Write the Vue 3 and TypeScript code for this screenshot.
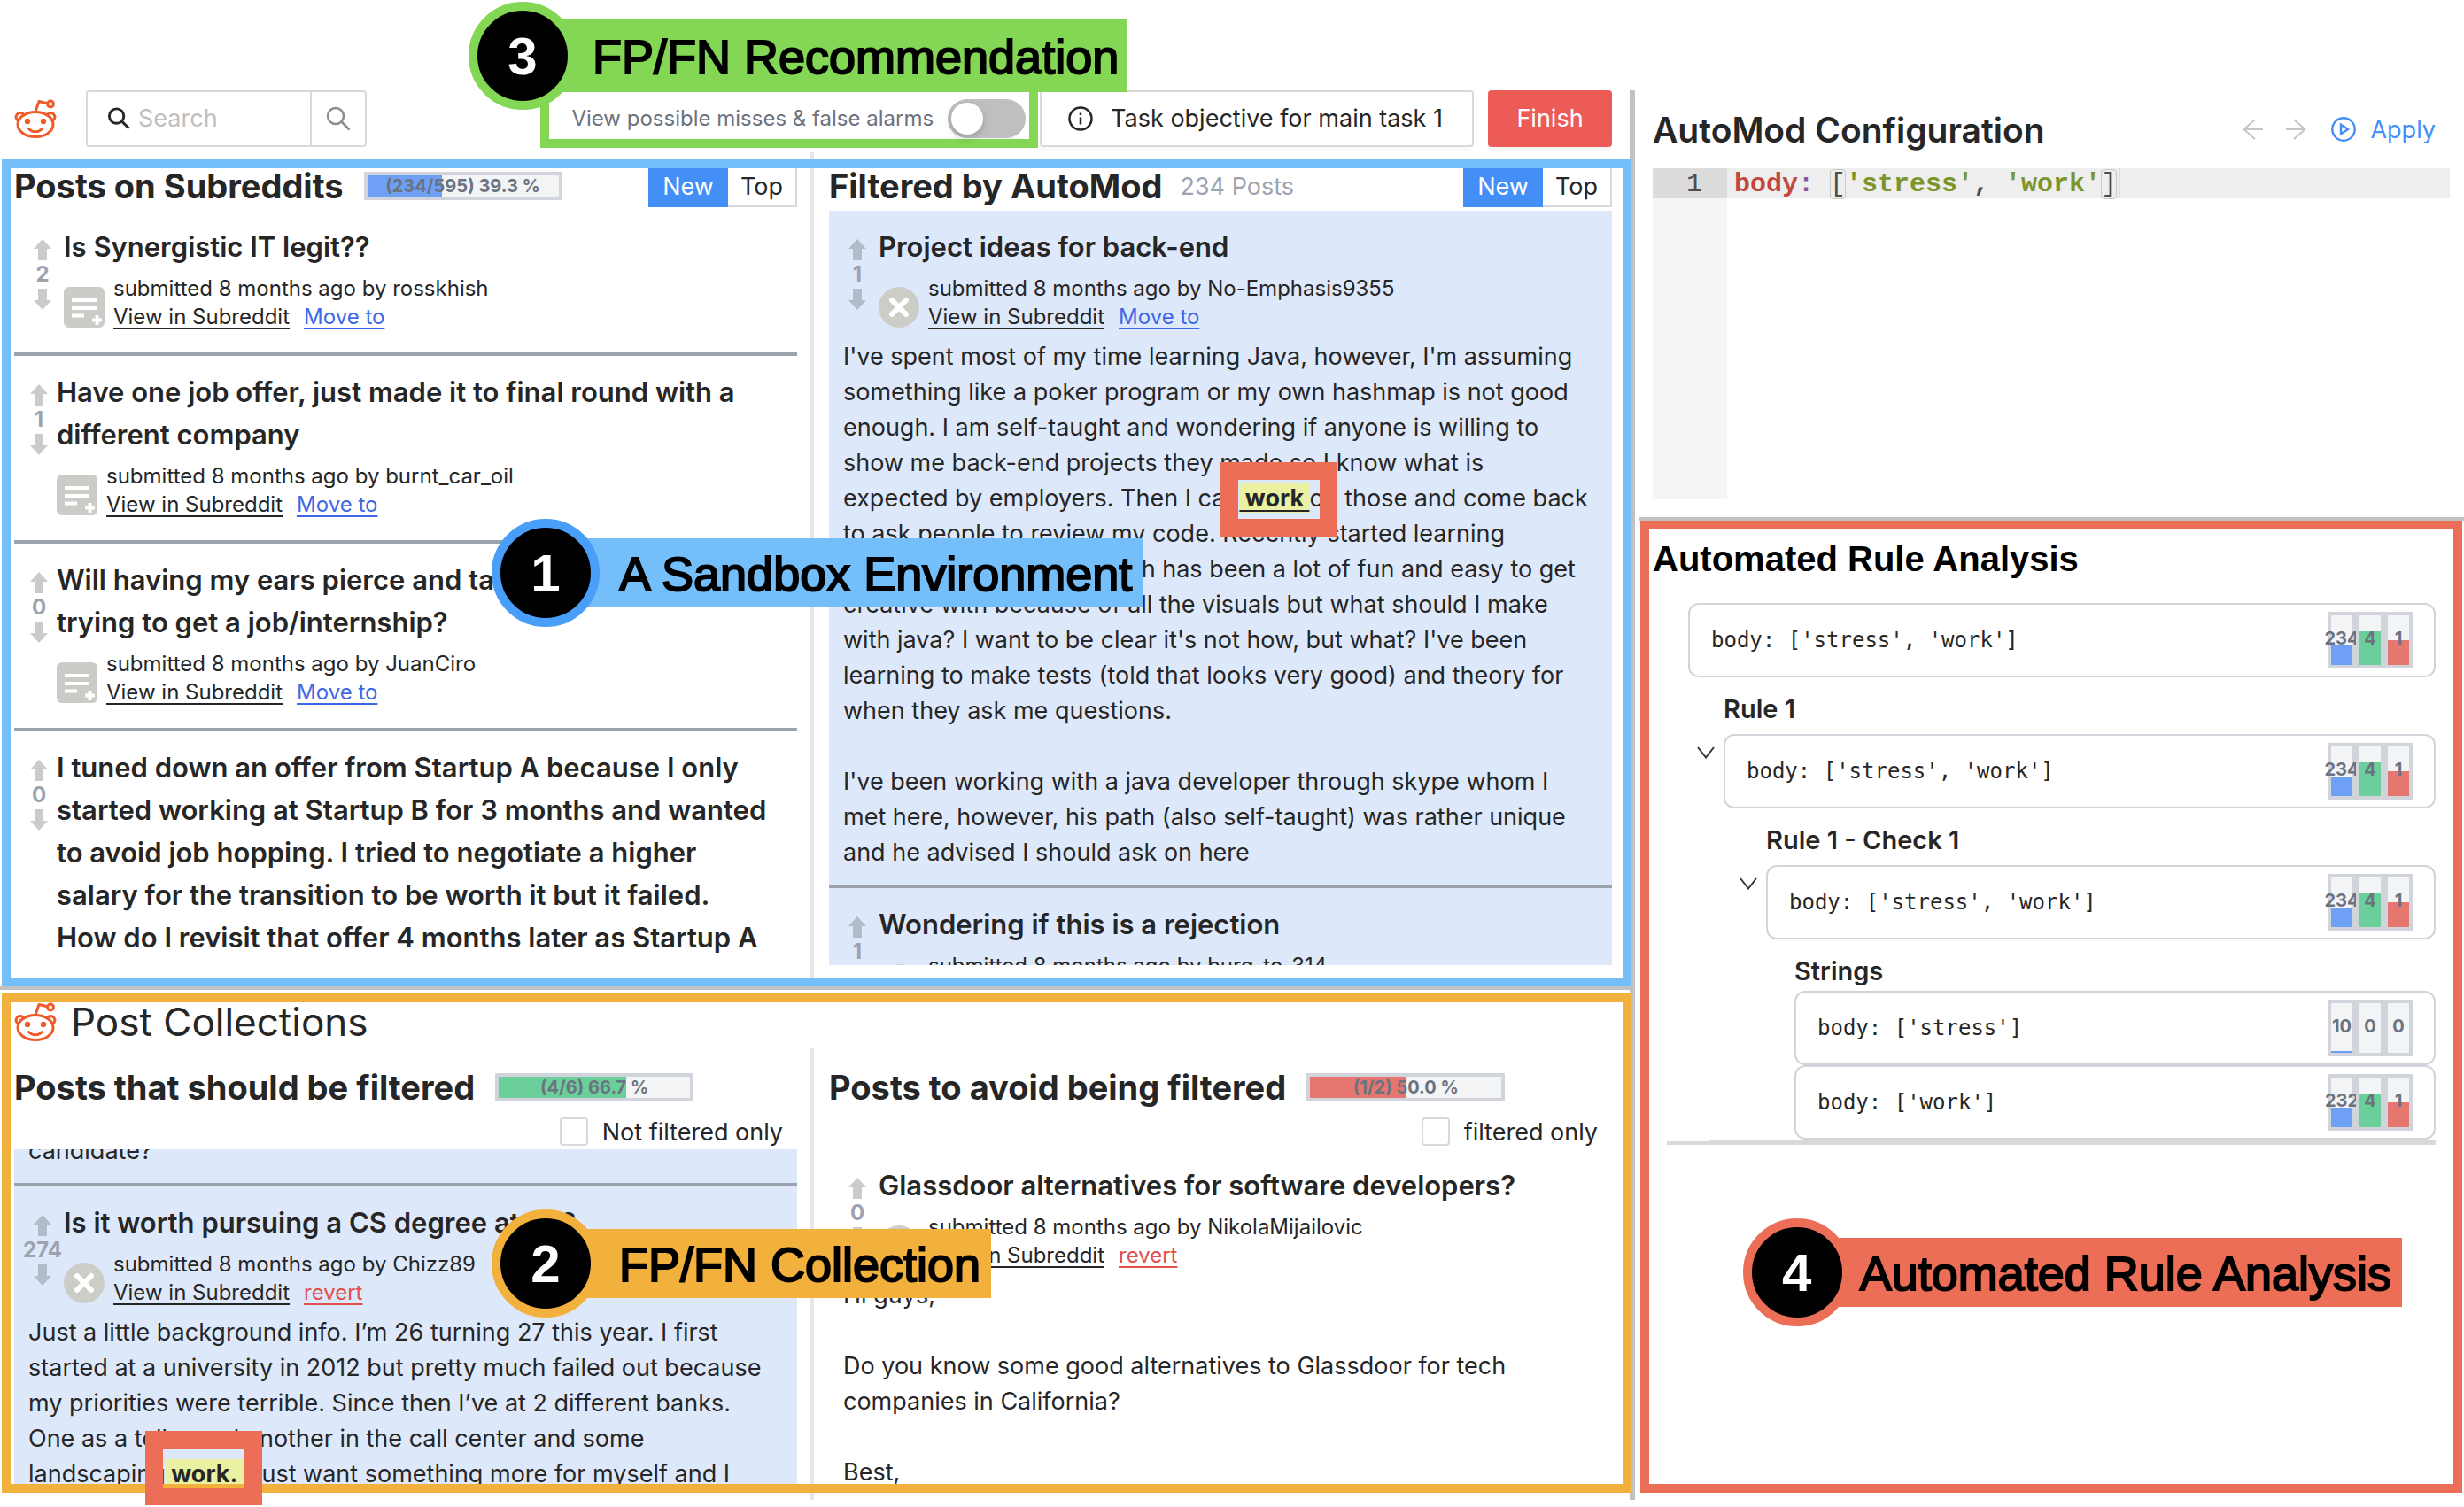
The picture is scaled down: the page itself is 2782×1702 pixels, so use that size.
<script setup lang="ts">
import { ref } from 'vue'

interface Segment { text: string; mark?: boolean; underline?: boolean }
interface Post {
  title?: string
  score?: number
  author?: string
  action?: string
  narrow?: boolean
  removed?: boolean
  tinted?: boolean
  body?: Segment[]
}
interface Meter { value: number; percent: number; tone: string }
interface RuleNode { label?: string; code: string; indent: number; caret?: boolean; flush?: boolean; meters: Meter[] }

const query = ref('')
const showMisses = ref(false)
const notFilteredOnly = ref(false)
const filteredOnly = ref(false)

const subredditPosts: Post[] = [
  { title: 'Is Synergistic IT legit??', score: 2, author: 'rosskhish', action: 'Move to' },
  { title: 'Have one job offer, just made it to final round with a\ndifferent company', score: 1, author: 'burnt_car_oil', action: 'Move to', narrow: true },
  { title: 'Will having my ears pierce and tattoos affect me\ntrying to get a job/internship?', score: 0, author: 'JuanCiro', action: 'Move to', narrow: true },
  { title: 'I tuned down an offer from Startup A because I only\nstarted working at Startup B for 3 months and wanted\nto avoid job hopping. I tried to negotiate a higher\nsalary for the transition to be worth it but it failed.\nHow do I revisit that offer 4 months later as Startup A', score: 0, narrow: true },
]

const filteredPosts: Post[] = [
  {
    title: 'Project ideas for back-end', score: 1, author: 'No-Emphasis9355', action: 'Move to', removed: true, tinted: true,
    body: [
      { text: "I've spent most of my time learning Java, however, I'm assuming\nsomething like a poker program or my own hashmap is not good\nenough. I am self-taught and wondering if anyone is willing to\nshow me back-end projects they made so I know what is\nexpected by employers. Then I can" },
      { text: ' work ', mark: true, underline: true },
      { text: "on those and come back\nto ask people to review my code. Recently started learning\nprocessing with java, which has been a lot of fun and easy to get\ncreative with because of all the visuals but what should I make\nwith java? I want to be clear it's not how, but what? I've been\nlearning to make tests (told that looks very good) and theory for\nwhen they ask me questions.\n\nI've been working with a java developer through skype whom I\nmet here, however, his path (also self-taught) was rather unique\nand he advised I should ask on here" },
    ],
  },
  { title: 'Wondering if this is a rejection', score: 1, author: 'burg_to_314', action: 'Move to', removed: true, tinted: true },
]

const shouldFilter: Post[] = [
  { tinted: true, body: [{ text: 'candidate?' }] },
  {
    title: 'Is it worth pursuing a CS degree at 26?', score: 274, author: 'Chizz89', action: 'revert', removed: true, tinted: true,
    body: [
      { text: 'Just a little background info. I’m 26 turning 27 this year. I first\nstarted at a university in 2012 but pretty much failed out because\nmy priorities were terrible. Since then I’ve at 2 different banks.\nOne as a teller and another in the call center and some\nlandscaping' },
      { text: ' work. ', mark: true },
      { text: 'I just want something more for myself and I' },
    ],
  },
]

const avoidFilter: Post[] = [
  {
    title: 'Glassdoor alternatives for software developers?', score: 0, author: 'NikolaMijailovic', action: 'revert', removed: true,
    body: [{ text: 'Hi guys,\n\nDo you know some good alternatives to Glassdoor for tech\ncompanies in California?\n\nBest,' }],
  },
]

const full: Meter[] = [
  { value: 234, percent: 39, tone: 'blue' },
  { value: 4, percent: 67, tone: 'green' },
  { value: 1, percent: 50, tone: 'red' },
]
const rules: RuleNode[] = [
  { code: "body: ['stress', 'work']", indent: 0, meters: full },
  { label: 'Rule 1', code: "body: ['stress', 'work']", indent: 40, caret: true, meters: full },
  { label: 'Rule 1 - Check 1', code: "body: ['stress', 'work']", indent: 88, caret: true, meters: full },
  { label: 'Strings', code: "body: ['stress']", indent: 120, flush: true, meters: [
    { value: 10, percent: 3, tone: 'blue' }, { value: 0, percent: 0, tone: 'green' }, { value: 0, percent: 0, tone: 'red' }] },
  { code: "body: ['work']", indent: 120, meters: [
    { value: 232, percent: 39, tone: 'blue' }, { value: 4, percent: 67, tone: 'green' }, { value: 1, percent: 50, tone: 'red' }] },
]

const columns = [
  { id: 'subs', title: 'Posts on Subreddits', posts: subredditPosts, meter: { text: '(234/595) 39.3 %', percent: 39.3, tone: 'blue' } },
  { id: 'auto', title: 'Filtered by AutoMod', posts: filteredPosts, count: '234 Posts' },
]
const collections = [
  { id: 'should', title: 'Posts that should be filtered', posts: shouldFilter, meter: { text: '(4/6) 66.7 %', percent: 66.7, tone: 'green' }, option: 'Not filtered only', model: notFilteredOnly },
  { id: 'avoid', title: 'Posts to avoid being filtered', posts: avoidFilter, meter: { text: '(1/2) 50.0 %', percent: 50, tone: 'red' }, option: 'filtered only', model: filteredOnly },
]
</script>

<template>
  <div class="page">
    <main class="left">
      <header class="topbar">
        <svg class="logo" viewBox="0 0 48 44" aria-hidden="true">
          <g fill="none" stroke="#f15a29" stroke-width="3" stroke-linecap="round" stroke-linejoin="round">
            <ellipse cx="24" cy="28.500" rx="20" ry="14" />
            <path d="M5 24.500a4.700 4.700 0 1 1 6-6.500M43 24.500a4.700 4.700 0 1 0-6-6.500M24 14l4-11.500 9.500 2.300" />
            <circle cx="41" cy="5.500" r="3.400" />
            <path d="M16.500 33.500c4 4.200 11 4.200 15 0" stroke-width="3" />
          </g>
          <circle cx="15" cy="25" r="3.200" fill="#f15a29" /><circle cx="33" cy="25" r="3.200" fill="#f15a29" />
        </svg>
        <form class="search" @submit.prevent>
          <label for="q"><svg viewBox="0 0 28 28" class="ico dark"><circle cx="11" cy="11" r="8.500" /><path d="M17.500 17.500l8 8" /></svg></label>
          <input id="q" v-model="query" type="text" placeholder="Search" />
          <button type="submit" aria-label="Search"><svg viewBox="0 0 28 28" class="ico"><circle cx="11" cy="11" r="9" /><path d="M17.500 17.500l9 9" /></svg></button>
        </form>
        <label class="misses">
          <span>View possible misses &amp; false alarms</span>
          <input v-model="showMisses" type="checkbox" role="switch" />
        </label>
        <button class="task">
          <svg viewBox="0 0 28 28" class="info"><circle cx="14" cy="14" r="12.500" /><path d="M14 12.500v8" /><path d="M14 7.500v2.500" /></svg>
          Task objective for main task 1
        </button>
        <button class="finish">Finish</button>
        <div class="callout c3"><b>3</b><span>FP/FN Recommendation</span></div>
      </header>

      <section class="panel sandbox">
        <article v-for="col in columns" :key="col.id" class="column">
          <div class="head">
            <h2>{{ col.title }}</h2>
            <div v-if="col.meter" class="progress">
              <i :class="col.meter.tone" :style="{ width: col.meter.percent + '%' }"></i>
              <span>{{ col.meter.text }}</span>
            </div>
            <span v-if="col.count" class="count">{{ col.count }}</span>
            <div class="sort"><button class="on">New</button><button>Top</button></div>
          </div>
          <div class="list">
            <div v-for="(p, i) in col.posts" :key="i" class="post" :class="{ tinted: p.tinted, narrow: p.narrow }">
              <div class="intro">
                <div class="vote">
                  <button aria-label="Upvote"><svg viewBox="0 0 20 24"><path d="M10 0l10 11h-5v13H5V11H0z" /></svg></button>
                  <span>{{ p.score }}</span>
                  <button aria-label="Downvote"><svg viewBox="0 0 20 24"><path d="M10 24l10-11h-5V0H5v13H0z" /></svg></button>
                </div>
                <div class="main">
                  <h3>{{ p.title }}</h3>
                  <div v-if="p.author" class="meta">
                    <svg v-if="p.removed" viewBox="0 0 46 46"><circle cx="23" cy="23" r="23" fill="#cdcdc8" /><path d="M15 15l16 16M31 15L15 31" stroke="#fff" stroke-width="6" stroke-linecap="round" /></svg>
                    <svg v-else viewBox="0 0 46 46"><rect width="46" height="46" rx="6" fill="#cbccc7" /><path d="M9 15h28M9 24h28M9 32.500h14M32 37.500h11M37.500 32v11" stroke="#fff" stroke-width="4" /></svg>
                    <div>
                      <p>submitted 8 months ago by {{ p.author }}</p>
                      <p><a href="#" class="view">View in Subreddit</a><a href="#" :class="p.action === 'revert' ? 'revert' : 'move'">{{ p.action }}</a></p>
                    </div>
                  </div>
                </div>
              </div>
              <p v-if="p.body" class="body"><template v-for="(s, j) in p.body" :key="j"><mark v-if="s.mark" :class="{ under: s.underline }">{{ s.text }}</mark><template v-else>{{ s.text }}</template></template></p>
            </div>
          </div>
        </article>
        <div class="spot s1"></div>
        <div class="callout c1"><b>1</b><span>A Sandbox Environment</span></div>
      </section>

      <section class="panel collection">
        <div class="ctitle">
          <svg class="logo" viewBox="0 0 48 44" aria-hidden="true">
            <g fill="none" stroke="#f15a29" stroke-width="3" stroke-linecap="round" stroke-linejoin="round">
              <ellipse cx="24" cy="28.500" rx="20" ry="14" />
              <path d="M5 24.500a4.700 4.700 0 1 1 6-6.500M43 24.500a4.700 4.700 0 1 0-6-6.500M24 14l4-11.500 9.500 2.300" />
              <circle cx="41" cy="5.500" r="3.400" />
              <path d="M16.500 33.500c4 4.200 11 4.200 15 0" stroke-width="3" />
            </g>
            <circle cx="15" cy="25" r="3.200" fill="#f15a29" /><circle cx="33" cy="25" r="3.200" fill="#f15a29" />
          </svg>
          <h1>Post Collections</h1>
        </div>
        <div class="pair">
          <article v-for="col in collections" :key="col.id" class="column">
            <div class="head">
              <h2>{{ col.title }}</h2>
              <div class="progress">
                <i :class="col.meter.tone" :style="{ width: col.meter.percent + '%' }"></i>
                <span>{{ col.meter.text }}</span>
              </div>
            </div>
            <label class="only"><input v-model="col.model.value" type="checkbox" />{{ col.option }}</label>
            <div class="list">
              <div v-for="(p, i) in col.posts" :key="i" class="post" :class="{ tinted: p.tinted, tail: !p.title }">
                <div v-if="p.title" class="intro">
                  <div class="vote">
                    <button aria-label="Upvote"><svg viewBox="0 0 20 24"><path d="M10 0l10 11h-5v13H5V11H0z" /></svg></button>
                    <span>{{ p.score }}</span>
                    <button aria-label="Downvote"><svg viewBox="0 0 20 24"><path d="M10 24l10-11h-5V0H5v13H0z" /></svg></button>
                  </div>
                  <div class="main">
                    <h3>{{ p.title }}</h3>
                    <div class="meta">
                      <svg viewBox="0 0 46 46"><circle cx="23" cy="23" r="23" fill="#cdcdc8" /><path d="M15 15l16 16M31 15L15 31" stroke="#fff" stroke-width="6" stroke-linecap="round" /></svg>
                      <div>
                        <p>submitted 8 months ago by {{ p.author }}</p>
                        <p><a href="#" class="view">View in Subreddit</a><a href="#" class="revert">{{ p.action }}</a></p>
                      </div>
                    </div>
                  </div>
                </div>
                <p v-if="p.body" class="body"><template v-for="(s, j) in p.body" :key="j"><mark v-if="s.mark">{{ s.text }}</mark><template v-else>{{ s.text }}</template></template></p>
              </div>
            </div>
          </article>
        </div>
        <div class="spot s2"></div>
        <div class="callout c2"><b>2</b><span>FP/FN Collection</span></div>
      </section>
    </main>

    <aside class="right">
      <section class="config">
        <div class="chead">
          <h2>AutoMod Configuration</h2>
          <button aria-label="Undo"><svg viewBox="0 0 24 24" class="arrow"><path d="M23 12H1M14 1L1.500 12 14 23" /></svg></button>
          <button aria-label="Redo"><svg viewBox="0 0 24 24" class="arrow"><path d="M1 12h22M10 1l12.500 11L10 23" /></svg></button>
          <button class="apply"><svg viewBox="0 0 28 28"><circle cx="14" cy="14" r="12.700" /><path d="M11 8.800v10.400l8-5.200z" /></svg>Apply</button>
        </div>
        <div class="editor">
          <div class="gutter"><span>1</span></div>
          <code><span class="key">body</span><span class="colon">:</span> <span class="br">[</span><span class="str">'stress'</span>, <span class="str">'work'</span><span class="br">]</span><i class="cursor"></i></code>
        </div>
      </section>
      <section class="analysis">
        <h2>Automated Rule Analysis</h2>
        <div class="tree">
          <div v-for="(r, i) in rules" :key="i" class="node" :style="{ marginLeft: r.indent + 'px' }">
            <h4 v-if="r.label" :class="{ flush: r.flush }">{{ r.label }}</h4>
            <div class="rule">
              <button v-if="r.caret" class="caret" aria-label="Collapse"><svg viewBox="0 0 20 14"><path d="M1 1l9 11.500L19 1" /></svg></button>
              <code>{{ r.code }}</code>
              <div class="bars">
                <div v-for="m in r.meters" :key="m.tone"><i :class="m.tone" :style="{ height: m.percent + '%' }"></i><span>{{ m.value }}</span></div>
              </div>
            </div>
          </div>
          <hr class="inner" /><hr />
        </div>
        <div class="callout c4"><b>4</b><span>Automated Rule Analysis</span></div>
      </section>
    </aside>
  </div>
</template>

<style>
body { margin: 0; background: #fff; }
</style>

<style scoped>
* { box-sizing: border-box; }
.page { position: relative; display: grid; grid-template-columns: 1840fr 942fr; height: 100vh; min-height: 1200px; overflow: hidden; font-family: Inter, "Liberation Sans", sans-serif; font-size: 27px; color: #262626; }
h1, h2, h3, h4, p { margin: 0; font-weight: inherit; }
button { margin: 0; padding: 0; border: 0; background: none; font: inherit; color: inherit; cursor: pointer; }
svg { display: block; flex: none; }
.left { position: relative; display: grid; grid-template-rows: 180fr 942fr 580fr; min-width: 0; min-height: 0; }
.left::after { content: ''; position: absolute; right: -6px; top: 102px; bottom: 8px; width: 6px; background: #c1c1c1; }

.topbar { position: relative; display: flex; align-items: center; padding: 87px 20px 0 16px; align-self: start; height: 180px; }
.topbar > * { flex: none; }
.logo { width: 48px; height: 44px; }
.search { display: flex; width: 317px; height: 64px; margin-left: 33px; border: 2px solid #d9d9d9; border-radius: 4px; align-items: center; }
.search label { padding: 0 8px 0 22px; }
.search input { flex: 1; min-width: 0; height: 100%; border: 0; outline: 0; padding: 0; font: inherit; color: inherit; }
.search input::placeholder { color: #bfbfbf; opacity: 1; }
.search button { width: 62px; height: 100%; border-left: 2px solid #d9d9d9; display: grid; place-items: center; }
.ico { width: 28px; height: 28px; fill: none; stroke: #8c8c8c; stroke-width: 2.500; }
.ico.dark { width: 27px; stroke: #262626; stroke-width: 3; }
.topbar .misses { display: flex; align-items: center; gap: 16px; margin-left: auto; height: 76px; margin-top: -9px; padding: 20px 4px 0 25px; border: 10px solid #84d755; border-top: 0; color: #6b7280; font-size: 24px; line-height: 28px; }
.misses input { appearance: none; margin: 0; width: 88px; height: 44px; border-radius: 22px; background: #bfbfbf; position: relative; }
.misses input::before { content: ''; position: absolute; left: 4px; top: 4px; width: 36px; height: 36px; border-radius: 50%; background: #fff; box-shadow: 0 4px 8px rgba(0, 35, 11, .2); }
.misses input:checked { background: #448ef7; }
.misses input:checked::before { left: 48px; }
.task { display: flex; align-items: center; gap: 20px; height: 64px; margin-left: 2px; padding: 0 33px 0 30px; border: 2px solid #d9d9d9; border-radius: 4px; box-shadow: 0 4px 0 rgba(0, 0, 0, .02); }
.info { width: 28px; height: 28px; fill: none; stroke: #262626; stroke-width: 2.500; }
.finish { width: 140px; height: 64px; margin-left: 16px; border-radius: 4px; background: #ec5b56; color: #fff; box-shadow: 0 4px 0 rgba(0, 0, 0, .04); }

.panel { position: relative; z-index: 1; min-height: 0; min-width: 0; }
.panel::before { content: ''; position: absolute; z-index: 2; inset: 0 -2px 8px 2px; border: 10px solid #74bef9; pointer-events: none; }
.sandbox { padding: 10px 20px 32px 16px; display: grid; grid-template-columns: 1fr 1fr; column-gap: 36px; }
.sandbox::after { content: ''; position: absolute; left: 0; right: 0; bottom: 4px; height: 4px; background: #c1c1c1; }
.collection::before { border-color: #f2b03d; inset: 0 -2px 16px 2px; }
.collection { padding: 4px 20px 26px 16px; display: flex; flex-direction: column; }
.column { position: relative; display: flex; flex-direction: column; min-width: 0; min-height: 0; }
.column:first-child::after { content: ''; position: absolute; right: -19px; top: -18px; bottom: -14px; width: 4px; background: #e5e7eb; }
.collection .column:first-child::after { top: 0; bottom: -18px; }
.pair { flex: 1; min-height: 0; display: grid; grid-template-columns: 1fr 1fr; column-gap: 36px; }
.ctitle { display: flex; align-items: center; gap: 16px; height: 56px; margin-bottom: 2px; flex: none; }
.ctitle h1 { font-size: 44px; line-height: 56px; }
.head { display: flex; align-items: center; height: 48px; flex: none; }
.sandbox .head { padding-bottom: 8px; }
.pair .head { height: 88px; }
.head h2 { font-size: 38px; line-height: 40px; font-weight: 700; white-space: nowrap; }
.progress { position: relative; width: 224px; height: 32px; margin-left: 23px; border: 4px solid #d1d5db; background: #f3f4f6; }
.progress i { display: block; height: 100%; }
.progress span { position: absolute; inset: 0; text-align: center; font-size: 20px; line-height: 24px; font-weight: 700; color: #6b7280; }
.blue { background: #6ea0f5; }
.green { background: #6bcf9c; }
.red { background: #e67670; }
.count { margin-left: 20px; color: #9ca3af; }
.sort { display: flex; margin-left: auto; height: 48px; align-self: flex-start; margin-top: -4px; }
.sort button { width: 78px; border: 2px solid #d9d9d9; border-left: 0; }
.sort .on { width: 90px; background: #448ef7; color: #fff; border: 0; }
.only { display: flex; align-items: center; justify-content: flex-end; gap: 16px; height: 28px; margin-bottom: 6px; padding-right: 16px; flex: none; margin-top: -8px; }
.only input { appearance: none; width: 32px; height: 32px; margin: 0; border: 2px solid #d9d9d9; border-radius: 4px; background: #fff; }
.only input:checked { background: #448ef7; }

.list { flex: 1; min-height: 0; overflow: hidden; }
.post { border-bottom: 4px solid #9ca3af; }
.post:last-child { border-bottom: 0; }
.tinted { background: #dee8fb; }
.intro { display: flex; height: auto; padding: 0 0 24px 8px; }
.vote { width: 48px; padding-top: 32px; flex: none; display: flex; flex-direction: column; align-items: center; }
.narrow .vote { width: 40px; }
.vote span { font-size: 24px; line-height: 32px; font-weight: 700; color: #9ca3af; }
.vote svg { width: 20px; height: 24px; fill: #cbcbcb; }
.tinted .vote svg { fill: #b1bccb; }
.main { padding-top: 17px; min-width: 0; }
.main h3 { font-size: 31px; line-height: 48px; font-weight: 600; white-space: pre; }
.meta { display: flex; gap: 10px; margin-top: 7px; font-size: 24px; line-height: 32px; white-space: nowrap; }
.meta svg { width: 46px; height: 46px; margin-top: 14px; }
.meta a { margin-right: 16px; text-underline-offset: 4px; text-decoration-thickness: 2px; }
.view { color: inherit; }
.move { color: #3f68e8; }
.revert { color: #e2504c; }
.intro:has(+ .body) { padding-bottom: 0; }
.body { padding: 9px 16px 16px; line-height: 40px; white-space: pre; }
.tail { margin-top: -18px; }
.tail .body { padding-top: 0; }
mark { background: #ebf1a3; color: inherit; font-weight: 700; }
.under { text-decoration: underline; text-underline-offset: 4px; text-decoration-thickness: 2px; }

.spot { position: absolute; z-index: 3; width: 132px; height: 84px; border: 20px solid #ec6e57; }
.s1 { left: 1378px; top: 342px; }
.s2 { left: 164px; top: 494px; }
.callout { position: absolute; z-index: 4; display: flex; align-items: center; height: 122px; font-family: "Liberation Sans", Arial, sans-serif; color: #000; --tone: #74bef9; --ring: #489ef8; }
.callout b { position: relative; z-index: 1; width: 122px; height: 122px; border: 10px solid var(--ring); border-radius: 50%; background: #000; color: #fff; font-size: 60px; line-height: 104px; text-align: center; }
.callout span { height: 78px; margin-left: -61px; padding: 0 12px 0 83px; background: var(--tone); font-size: 54px; line-height: 80px; white-space: nowrap; -webkit-text-stroke: 2px #000; }
.c1 { left: 555px; top: 406px; }
.c2 { left: 555px; top: 244px; --tone: #f2b03d; --ring: #f2b03d; }
.topbar .c3 { left: 529px; top: 2px; --tone: #84d755; --ring: #84d755; }
.callout.c3 span { height: 82px; padding: 0 10px 0 79px; line-height: 84px; }
.c4 { right: 58px; top: 778px; --tone: #ec6e57; --ring: #ec6e57; }
.callout.c4 span { padding-left: 71px; }

.right { display: grid; grid-template-rows: 588fr 1114fr; min-width: 0; min-height: 0; }
.config { padding: 106px 16px 24px 26px; display: flex; flex-direction: column; position: relative; }
.config::after { content: ''; position: absolute; left: 10px; right: 0; bottom: 0; height: 4px; background: #c1c1c1; }
.chead { display: flex; align-items: center; height: 80px; margin-bottom: 4px; gap: 24px; padding-right: 16px; }
.chead h2 { flex: 1; font-size: 39px; font-weight: 600; white-space: nowrap; }
.arrow { width: 24px; height: 24px; fill: none; stroke: #c4c4c4; stroke-width: 2; }
.apply { display: flex; align-items: center; gap: 16px; margin-left: 4px; color: #448ef7; }
.apply svg { width: 28px; height: 28px; fill: none; stroke: #448ef7; stroke-width: 2.400; }
.editor { flex: 1; display: flex; font-family: "Liberation Mono", monospace; font-size: 30px; line-height: 36px; color: #4d4d4c; }
.gutter { width: 84px; background: #f5f5f5; }
.gutter span { display: block; height: 34px; padding-right: 28px; text-align: right; background: #dcdcdc; }
.editor code { flex: 1; height: 34px; padding-left: 8px; background: #eee; font: inherit; font-weight: 700; white-space: pre; }
.key { color: #c0483f; }
.colon { color: #8959a8; }
.str { color: #7c952b; }
.br { outline: 1px solid #c8c8c8; outline-offset: -1px; border-radius: 4px; font-weight: 400; }
.cursor { display: inline-block; width: 2px; height: 34px; vertical-align: top; background: #ddd; margin-left: 2px; }

.analysis { position: relative; margin: 0 2px 16px 12px; border: 10px solid #ec6e57; padding: 12px 20px 0 4px; }
.analysis h2 { font: 700 40px/42px "Liberation Sans", Arial, sans-serif; color: #000; }
.tree { padding: 29px 0 0 40px; }
.node h4 { margin: 14px 0 6px; font-size: 29px; line-height: 44px; font-weight: 600; }
.node h4.flush { margin-bottom: 0; }
.rule { position: relative; display: flex; align-items: center; justify-content: space-between; height: 84px; border: 2px solid #d1d5db; border-radius: 12px; padding: 0 24px; }
.rule code { font: 24px/32px "DejaVu Sans Mono", monospace; white-space: pre; }
.caret { position: absolute; left: -32px; top: 12px; }
.caret svg { width: 20px; height: 14px; fill: none; stroke: #333; stroke-width: 2; }
.bars { display: flex; }
.bars div { position: relative; width: 32px; height: 64px; border: 4px solid #d1d5db; background: #f3f4f6; display: flex; align-items: flex-end; }
.bars i { width: 100%; }
.bars span { position: absolute; left: -8px; right: -8px; top: 14px; text-align: center; font-size: 20px; line-height: 24px; font-weight: 700; color: #6b7280; }
hr { margin: 0 0 0 -24px; border: 0; height: 4px; background: #d9d9d9; }
hr.inner { margin: 0 0 -2px 24px; }
</style>
